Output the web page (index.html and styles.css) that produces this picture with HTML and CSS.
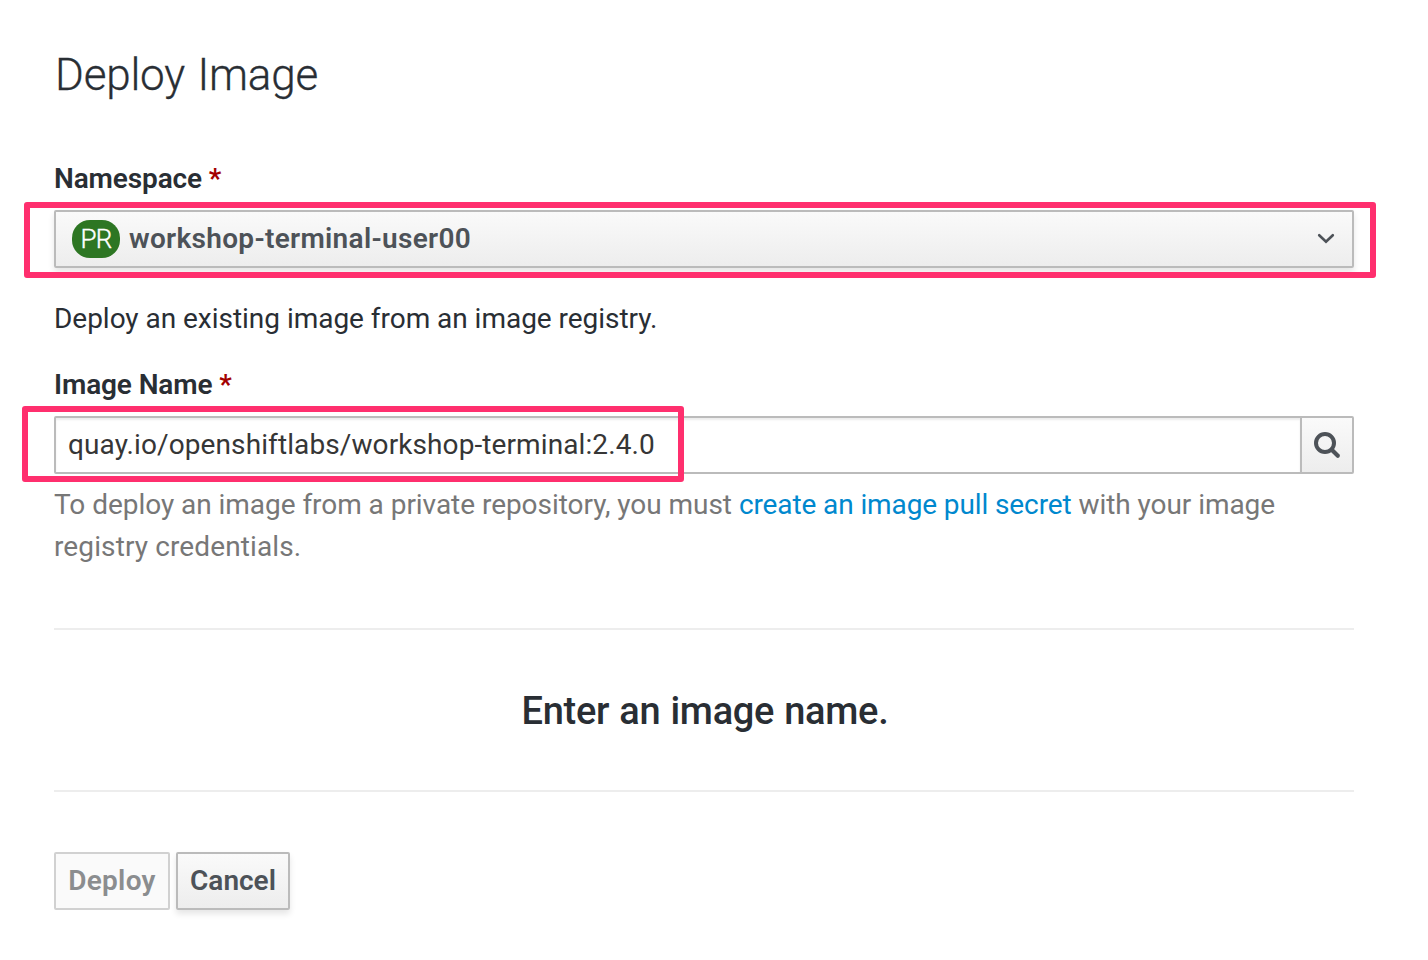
FILE: index.html
```html
<!DOCTYPE html>
<html lang="en">
<head>
<meta charset="utf-8">
<title>Deploy Image</title>
<link rel="stylesheet" href="styles.css">
</head>
<body>
<main class="page">
  <h1 class="title"><span>Deploy Image</span></h1>
  <form class="form">
    <label class="label label-namespace"><span>Namespace</span> <span class="required">*</span></label>
    <div class="field">
      <button type="button" class="select">
        <span class="badge"><span>PR</span></span>
        <span class="select-text">workshop-terminal-user00</span>
        <svg class="chevron" width="20" height="14" viewBox="0 0 20 14"><path d="M3.2 3.2 10 9.8l6.8-6.6" fill="none" stroke="#4d5258" stroke-width="2.6" stroke-linecap="round"/></svg>
      </button>
      <div class="highlight highlight-select"></div>
    </div>
    <p class="description"><span>Deploy an existing image from an image registry.</span></p>
    <label class="label label-image"><span>Image Name</span> <span class="required">*</span></label>
    <div class="field">
      <div class="input-group">
        <div class="input"><span>quay.io/openshiftlabs/workshop-terminal:2.4.0</span></div>
        <button type="button" class="search" aria-label="Search">
          <svg width="30" height="30" viewBox="0 0 30 30" fill="none" stroke="#4d5258"><circle cx="13" cy="13" r="9" stroke-width="4"/><path d="M20 20l5.8 5.8" stroke-width="4.2" stroke-linecap="round"/></svg>
        </button>
      </div>
      <div class="highlight highlight-input"></div>
    </div>
    <p class="help"><span class="help-a">To deploy an image from a private repository, you must</span> <a class="link">create an image pull secret</a> <span class="help-b">with your image</span><br><span class="help-c">registry credentials.</span></p>
    <div class="empty"><span>Enter an image name.</span></div>
    <div class="actions">
      <button type="button" class="btn btn-deploy" disabled><span>Deploy</span></button>
      <button type="button" class="btn btn-cancel"><span>Cancel</span></button>
    </div>
  </form>
</main>
</body>
</html>
```
FILE: styles.css
```css
* { box-sizing: border-box; }
body { margin: 0; background: #fff; color: #292e34; font-family: Roboto, "Liberation Sans", sans-serif; font-size: 28px; line-height: 42px; }
button { font: inherit; margin: 0; }
h1, p { margin: 0; }
.page { height: 960px; overflow: hidden; padding: 47px 74px 0 54px; white-space: nowrap; }
.title { font-size: 44px; line-height: 56px; font-weight: 300; padding-left: 1px; letter-spacing: -0.2px; word-spacing: 2px; -webkit-text-stroke: 0.3px #292e34; }
.form { display: flex; flex-direction: column; }
.label { height: 42px; font-weight: 600; letter-spacing: -0.12px; }
.label-namespace { margin-top: 55px; }
.label-image { margin-top: 24px; }
.required { color: #a30000; }
.field { position: relative; margin-top: 10px; }
.select { display: flex; align-items: center; width: 100%; height: 58px; padding: 0 16px; border: 2px solid #bbb; border-radius: 2px; background: linear-gradient(#fafafa, #ededed); box-shadow: 0 4px 6px rgba(3, 3, 3, 0.1); color: #4d5258; font-weight: 600; }
.select-text { letter-spacing: 0.3px; }
.badge { width: 48px; height: 38px; border-radius: 18px; background: #2d7623; color: #fff; font-size: 26px; font-weight: 300; -webkit-text-stroke: 0.4px #fff; letter-spacing: -0.8px; line-height: 39px; text-align: center; margin-right: 9px; }
.chevron { margin-left: auto; }
.highlight { position: absolute; border: 6px solid #ff2f6e; border-radius: 3px; pointer-events: none; }
.highlight-select { left: -30px; top: -8.5px; width: 1352px; height: 76.5px; }
.highlight-input { left: -32px; top: -10px; width: 662px; height: 76px; }
.description { margin-top: 30px; letter-spacing: -0.03px; }
.input-group { display: flex; height: 58px; border: 2px solid #bbb; border-radius: 2px; }
.input { flex: 1; padding: 6px 12px; color: #363636; letter-spacing: 0.1px; box-shadow: inset 0 2px 2px rgba(3, 3, 3, 0.075); }
.search { width: 52px; padding: 0; border: 0; border-left: 2px solid #bbb; background: linear-gradient(#fafafa, #ededed); display: flex; align-items: center; justify-content: center; }
.help { margin-top: 10px; color: #777; }
.help-a { letter-spacing: -0.04px; }
.link { color: #0088ce; letter-spacing: -0.11px; }
.help-b { letter-spacing: -0.06px; }
.help-c { letter-spacing: 0.12px; }
.empty { height: 164px; margin-top: 60px; padding: 2px 0 0 2px; border: solid #ededed; border-width: 2px 0; display: flex; align-items: center; justify-content: center; font-size: 38px; font-weight: 500; letter-spacing: -0.3px; word-spacing: 1px; }
.actions { display: flex; gap: 6px; margin-top: 60px; }
.btn { height: 58px; padding: 0; border: 2px solid #bbb; border-radius: 2px; font-weight: 600; }
.btn-deploy { width: 116px; border-color: #d1d1d1; background: #fafafa; color: #8b8d8f; letter-spacing: 0.3px; }
.btn-cancel { width: 114px; background: linear-gradient(#fafafa, #ededed); color: #4d5258; box-shadow: 0 4px 6px rgba(3, 3, 3, 0.1); }
```
